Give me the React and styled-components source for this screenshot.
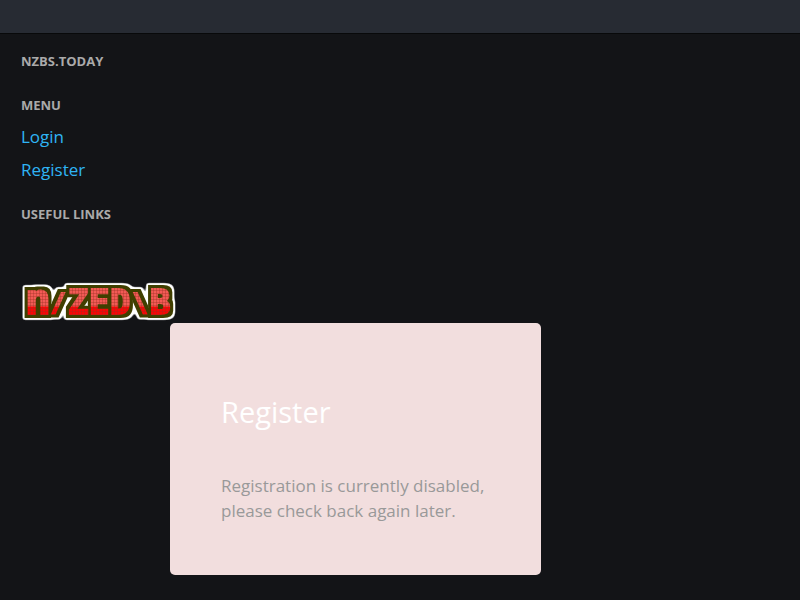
import React from 'react';
import styled, { createGlobalStyle } from 'styled-components';

const GlobalStyle = createGlobalStyle`
    * {
        box-sizing: border-box;
    }

    body {
        margin: 0;
        background-color: #131417;
        color: #999;
        font-family: "Open Sans", "Noto Sans", sans-serif;
        font-size: 17px;
        line-height: 25px;
    }
`;

const NavBar = styled.header`
    height: 34px;
    background-color: #272b33;
    border-bottom: 1px solid #08090a;
`;

const SideBar = styled.nav`
    padding: 15px 21px 0;
`;

const NavTitle = styled.h2`
    margin: 0 0 20px;
    font-size: 13px;
    line-height: 24px;
    font-weight: 700;
    color: #aaa;
    text-transform: uppercase;
`;

const MenuTitle = styled(NavTitle)`
    margin-bottom: 3px;
`;

const NavList = styled.ul`
    margin: 0 0 16px;
    padding: 0;
    list-style: none;
`;

const NavLink = styled.a`
    display: block;
    width: fit-content;
    padding: 4px 0;
    color: #2fb4f5;
    text-decoration: none;
`;

const LogoLink = styled.a`
    display: block;
    width: fit-content;
    margin: 42px 0 0 21px;
`;

const LogoSvg = styled.svg`
    display: block;
    font-family: "DejaVu Sans Mono", monospace;
    font-weight: 700;
    font-size: 34px;
`;

const Main = styled.main`
    padding: 0 24px 24px 170px;
`;

const Card = styled.section`
    max-width: 371px;
    padding: 69px 51px 52px;
    border-radius: 5px;
    background-color: #f2dede;
`;

const Title = styled.h1`
    margin: 0 0 41px;
    font-size: 29px;
    line-height: 40px;
    font-weight: 400;
    color: #fff;
`;

const Message = styled.p`
    margin: 0;
`;

const Logo = () => (
    <LogoSvg width="156" height="55" viewBox="0 -14 156 55" role="img" aria-label="n/ZED\B">
        <defs>
            <linearGradient id="red" x1="0" y1="0" x2="0" y2="42" gradientUnits="userSpaceOnUse">
                <stop offset="0.57" stopColor="#f25a55" />
                <stop offset="0.6" stopColor="#fa0505" />
            </linearGradient>
            <pattern id="dots" width="3" height="42" patternUnits="userSpaceOnUse">
                <rect width="3" height="42" fill="url(#red)" />
                <path d="M0.5 0V42" stroke="#983020" opacity="0.35" />
                <path d="M0 2.5H3M0 5.5H3M0 8.5H3M0 11.5H3M0 14.5H3M0 17.5H3M0 20.5H3M0 23.5H3M0 26.5H3M0 29.5H3M0 32.5H3" stroke="#983020" opacity="0.35" />
            </pattern>
            <filter id="rim" x="-4" y="-14" width="164" height="58" filterUnits="userSpaceOnUse" colorInterpolationFilters="sRGB">
                <feMorphology in="SourceAlpha" operator="dilate" radius="3" result="wide" />
                <feFlood floodColor="#403f00" />
                <feComposite in2="wide" operator="in" result="olive" />
                <feMorphology in="wide" operator="dilate" radius="2" />
                <feGaussianBlur stdDeviation="1.5" />
                <feComponentTransfer result="halo">
                    <feFuncA type="linear" slope="3" intercept="-1" />
                </feComponentTransfer>
                <feFlood floodColor="#fff" />
                <feComposite in2="halo" operator="in" result="white" />
                <feMerge>
                    <feMergeNode in="white" />
                    <feMergeNode in="olive" />
                    <feMergeNode in="SourceGraphic" />
                </feMerge>
            </filter>
        </defs>
        <text y="32" fill="url(#dots)" stroke="url(#dots)" strokeWidth="2" filter="url(#rim)">
            <tspan x="4" fontSize="43">n</tspan>
            <tspan x="30" y="29" fontSize="24">/</tspan>
            <tspan x="47" y="32">Z</tspan>
            <tspan x="68">E</tspan>
            <tspan x="89">D</tspan>
            <tspan x="112" y="29" fontSize="24">\</tspan>
            <tspan x="129" y="32">B</tspan>
        </text>
    </LogoSvg>
);

const App = () => (
    <>
        <GlobalStyle />
        <NavBar />
        <SideBar>
            <NavTitle>nzbs.today</NavTitle>
            <MenuTitle>Menu</MenuTitle>
            <NavList>
                <li><NavLink href="#login">Login</NavLink></li>
                <li><NavLink href="#register">Register</NavLink></li>
            </NavList>
            <NavTitle>Useful links</NavTitle>
        </SideBar>
        <LogoLink href="#home"><Logo /></LogoLink>
        <Main>
            <Card>
                <Title>Register</Title>
                <Message>Registration is currently disabled, please check back again later.</Message>
            </Card>
        </Main>
    </>
);

export default App;
